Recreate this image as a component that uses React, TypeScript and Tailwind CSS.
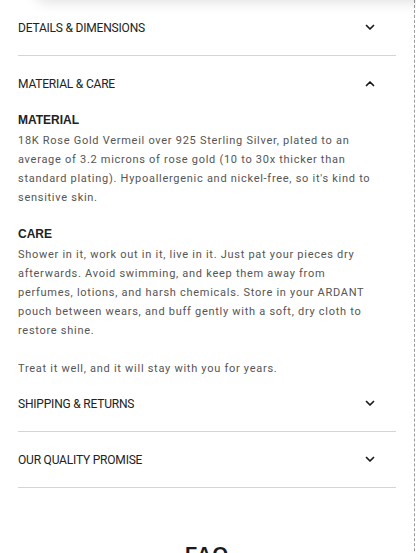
import { useState } from 'react';

type Section = {
    title: string;
    body?: React.ReactNode;
};

function Chevron({ open }: { open: boolean }) {
    return (
        <svg width="10" height="7" viewBox="0 0 10 7" className="shrink-0" aria-hidden>
            <path
                d={open ? 'M1.5 5.5 L5 2 L8.5 5.5' : 'M1.5 1.5 L5 5 L8.5 1.5'}
                fill="none"
                stroke="#1a1a1a"
                strokeWidth="1.7"
                strokeLinecap="round"
                strokeLinejoin="round"
            />
        </svg>
    );
}

const materialCare = (
    <div className="mb-[-2px] font-['Roboto',sans-serif] text-[11px] leading-[19px] tracking-[0.72px] text-[#555]">
        <h4 className="font-['Liberation_Sans',Arial,sans-serif] text-[12px] font-bold leading-[18px] tracking-normal text-[#222]">
            MATERIAL
        </h4>
        <p className="pt-[2px]">
            18K Rose Gold Vermeil over 925 Sterling Silver, plated to an
            <br />
            average of 3.2 microns of rose gold (10 to 30x thicker than
            <br />
            standard plating). Hypoallergenic and nickel-free, so it's kind to
            <br />
            sensitive skin.
        </p>
        <h4 className="mt-[18px] font-['Liberation_Sans',Arial,sans-serif] text-[12px] font-bold leading-[18px] tracking-normal text-[#222]">
            CARE
        </h4>
        <p className="pt-[2px]">
            Shower in it, work out in it, live in it. Just pat your pieces dry
            <br />
            afterwards. Avoid swimming, and keep them away from
            <br />
            perfumes, lotions, and harsh chemicals. Store in your ARDANT
            <br />
            pouch between wears, and buff gently with a soft, dry cloth to
            <br />
            restore shine.
        </p>
        <p className="mt-[19px]">Treat it well, and it will stay with you for years.</p>
    </div>
);

const sections: Section[] = [
    { title: 'DETAILS & DIMENSIONS' },
    { title: 'MATERIAL & CARE', body: materialCare },
    { title: 'SHIPPING & RETURNS' },
    { title: 'OUR QUALITY PROMISE' },
];

export default function App() {
    const [openIndex, setOpenIndex] = useState<number | null>(1);

    return (
        <div className="relative h-[553px] w-[416px] overflow-hidden bg-white">
            {/* sticky bar sitting just above the fold, only its shadow shows */}
            <div className="pointer-events-none absolute -top-[40px] left-[34px] right-[-20px] h-[40px] rounded-[14px] bg-white shadow-[0_2px_14px_rgba(0,0,0,0.13)]" />

            <div className="min-h-full w-[415px] border-r border-dashed border-[#9a9a9a] px-[18px] pb-[40px]">
                {sections.map((section, i) => {
                    const open = openIndex === i;
                    return (
                        <div key={section.title} className={open ? '' : 'border-b border-[#d4d4d4]'}>
                            <button
                                type="button"
                                onClick={() => setOpenIndex(open ? null : i)}
                                className="flex h-[55px] w-full items-center justify-between pr-[21px] text-left"
                            >
                                <span className="font-['Roboto',sans-serif] text-[12px] leading-[16px] tracking-[-0.2px] text-[#222]">
                                    {section.title}
                                </span>
                                <Chevron open={open} />
                            </button>
                            {open && section.body}
                        </div>
                    );
                })}

                <h2 className="mt-[54px] text-center font-['Liberation_Sans',Arial,sans-serif] text-[20px] font-bold leading-[24px] tracking-[1px] text-[#1a1a1a]">
                    FAQ
                </h2>
            </div>
        </div>
    );
}
